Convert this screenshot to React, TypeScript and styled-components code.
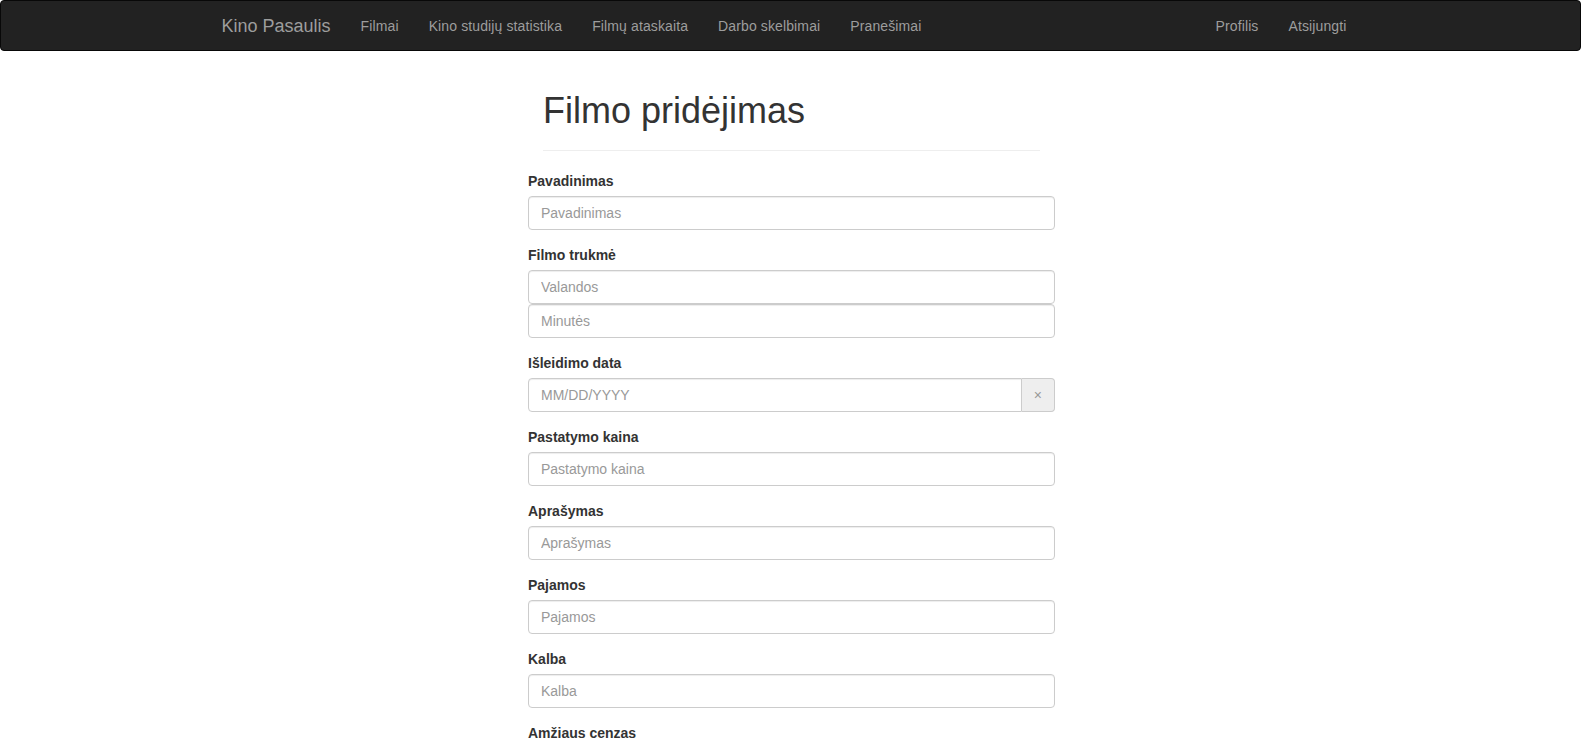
import React from "react";
import styled, { createGlobalStyle } from "styled-components";

const Global = createGlobalStyle`
  html { scrollbar-width: none; }
  html::-webkit-scrollbar, body::-webkit-scrollbar { display: none; }
  * { box-sizing: border-box; }
  body {
    margin: 0;
    font-family: "Liberation Sans", Arial, Helvetica, sans-serif;
    font-size: 14px;
    line-height: 1.42857143;
    color: #333;
    background: #fff;
  }
`;

const Navbar = styled.nav`
  height: 51px;
  margin-right: 2px;
  padding-left: 2px;
  background: #222;
  border: 1px solid #080808;
  border-radius: 4px;
`;

const NavContainer = styled.div`
  width: 1170px;
  margin: 0 auto;
  padding: 0 15px;
  display: flex;
  align-items: stretch;
  height: 100%;
`;

const Brand = styled.a`
  margin-left: -15px;
  padding: 15px;
  height: 50px;
  font-size: 18px;
  line-height: 20px;
  color: #9d9d9d;
  text-decoration: none;
  cursor: pointer;
`;

const NavList = styled.ul<{ $right?: boolean }>`
  list-style: none;
  margin: 0;
  padding: 0;
  display: flex;
  margin-left: ${(p) => (p.$right ? "auto" : "0")};
`;

const NavLink = styled.a`
  display: block;
  padding: 15px;
  line-height: 20px;
  font-size: 14px;
  letter-spacing: 0.12px;
  color: #9d9d9d;
  text-decoration: none;
  cursor: pointer;
`;

const Main = styled.main`
  display: flex;
  flex-direction: column;
  align-items: center;
  padding-top: 20px;
`;

const PageHeader = styled.div`
  width: 497px;
  padding-bottom: 9px;
  margin-bottom: 20px;
  border-bottom: 1px solid #eee;
  display: flex;
  flex-direction: column;
`;

const Title = styled.h1`
  margin: 20px 0 10px;
  font-size: 36px;
  font-weight: 500;
  line-height: 1.1;
  color: inherit;
`;

const Form = styled.form`
  width: 527px;
`;

const FormGroup = styled.div`
  margin-bottom: 15px;
`;

const Label = styled.label`
  display: block;
  margin-bottom: 5px;
  font-weight: 700;
  line-height: 20px;
`;

const Input = styled.input<{ $grouped?: boolean }>`
  display: block;
  width: 100%;
  height: 34px;
  padding: 6px 12px;
  font-family: inherit;
  font-size: 14px;
  line-height: 1.42857143;
  color: #555;
  background: #fff;
  border: 1px solid #ccc;
  border-radius: ${(p) => (p.$grouped ? "4px 0 0 4px" : "4px")};
  box-shadow: inset 0 1px 1px rgba(0, 0, 0, 0.075);
  outline: none;
  &::placeholder { color: #999; opacity: 1; }
`;

const InputGroup = styled.div`
  display: flex;
  width: 100%;
`;

const Addon = styled.span`
  display: flex;
  align-items: center;
  justify-content: center;
  padding: 6px 12px;
  height: 34px;
  font-size: 14px;
  line-height: 1;
  color: #999;
  background: #eee;
  border: 1px solid #ccc;
  border-left: 0;
  border-radius: 0 4px 4px 0;
`;

const Submit = styled.button`
  padding: 6px 12px;
  font-family: inherit;
  font-size: 14px;
  line-height: 1.42857143;
  color: #fff;
  background: #337ab7;
  border: 1px solid #2e6da4;
  border-radius: 4px;
  margin-bottom: 40px;
`;

const fields = [
  { label: "Pastatymo kaina", ph: "Pastatymo kaina" },
  { label: "Aprašymas", ph: "Aprašymas" },
  { label: "Pajamos", ph: "Pajamos" },
  { label: "Kalba", ph: "Kalba" },
  { label: "Amžiaus cenzas", ph: "Amžiaus cenzas" },
];

export default function App() {
  return (
    <>
      <Global />
      <Navbar>
        <NavContainer>
          <Brand>Kino Pasaulis</Brand>
          <NavList>
            {["Filmai", "Kino studijų statistika", "Filmų ataskaita", "Darbo skelbimai", "Pranešimai"].map((t) => (
              <li key={t}>
                <NavLink>{t}</NavLink>
              </li>
            ))}
          </NavList>
          <NavList $right>
            {["Profilis", "Atsijungti"].map((t) => (
              <li key={t}>
                <NavLink>{t}</NavLink>
              </li>
            ))}
          </NavList>
        </NavContainer>
      </Navbar>
      <Main>
        <PageHeader>
          <Title>Filmo pridėjimas</Title>
        </PageHeader>
        <Form onSubmit={(e) => e.preventDefault()}>
          <FormGroup>
            <Label>Pavadinimas</Label>
            <Input placeholder="Pavadinimas" />
          </FormGroup>
          <FormGroup>
            <Label>Filmo trukmė</Label>
            <Input placeholder="Valandos" />
            <Input placeholder="Minutės" />
          </FormGroup>
          <FormGroup>
            <Label>Išleidimo data</Label>
            <InputGroup>
              <Input $grouped placeholder="MM/DD/YYYY" />
              <Addon>×</Addon>
            </InputGroup>
          </FormGroup>
          {fields.map((f) => (
            <FormGroup key={f.label}>
              <Label>{f.label}</Label>
              <Input placeholder={f.ph} />
            </FormGroup>
          ))}
          <Submit type="submit">Pridėti</Submit>
        </Form>
      </Main>
    </>
  );
}
